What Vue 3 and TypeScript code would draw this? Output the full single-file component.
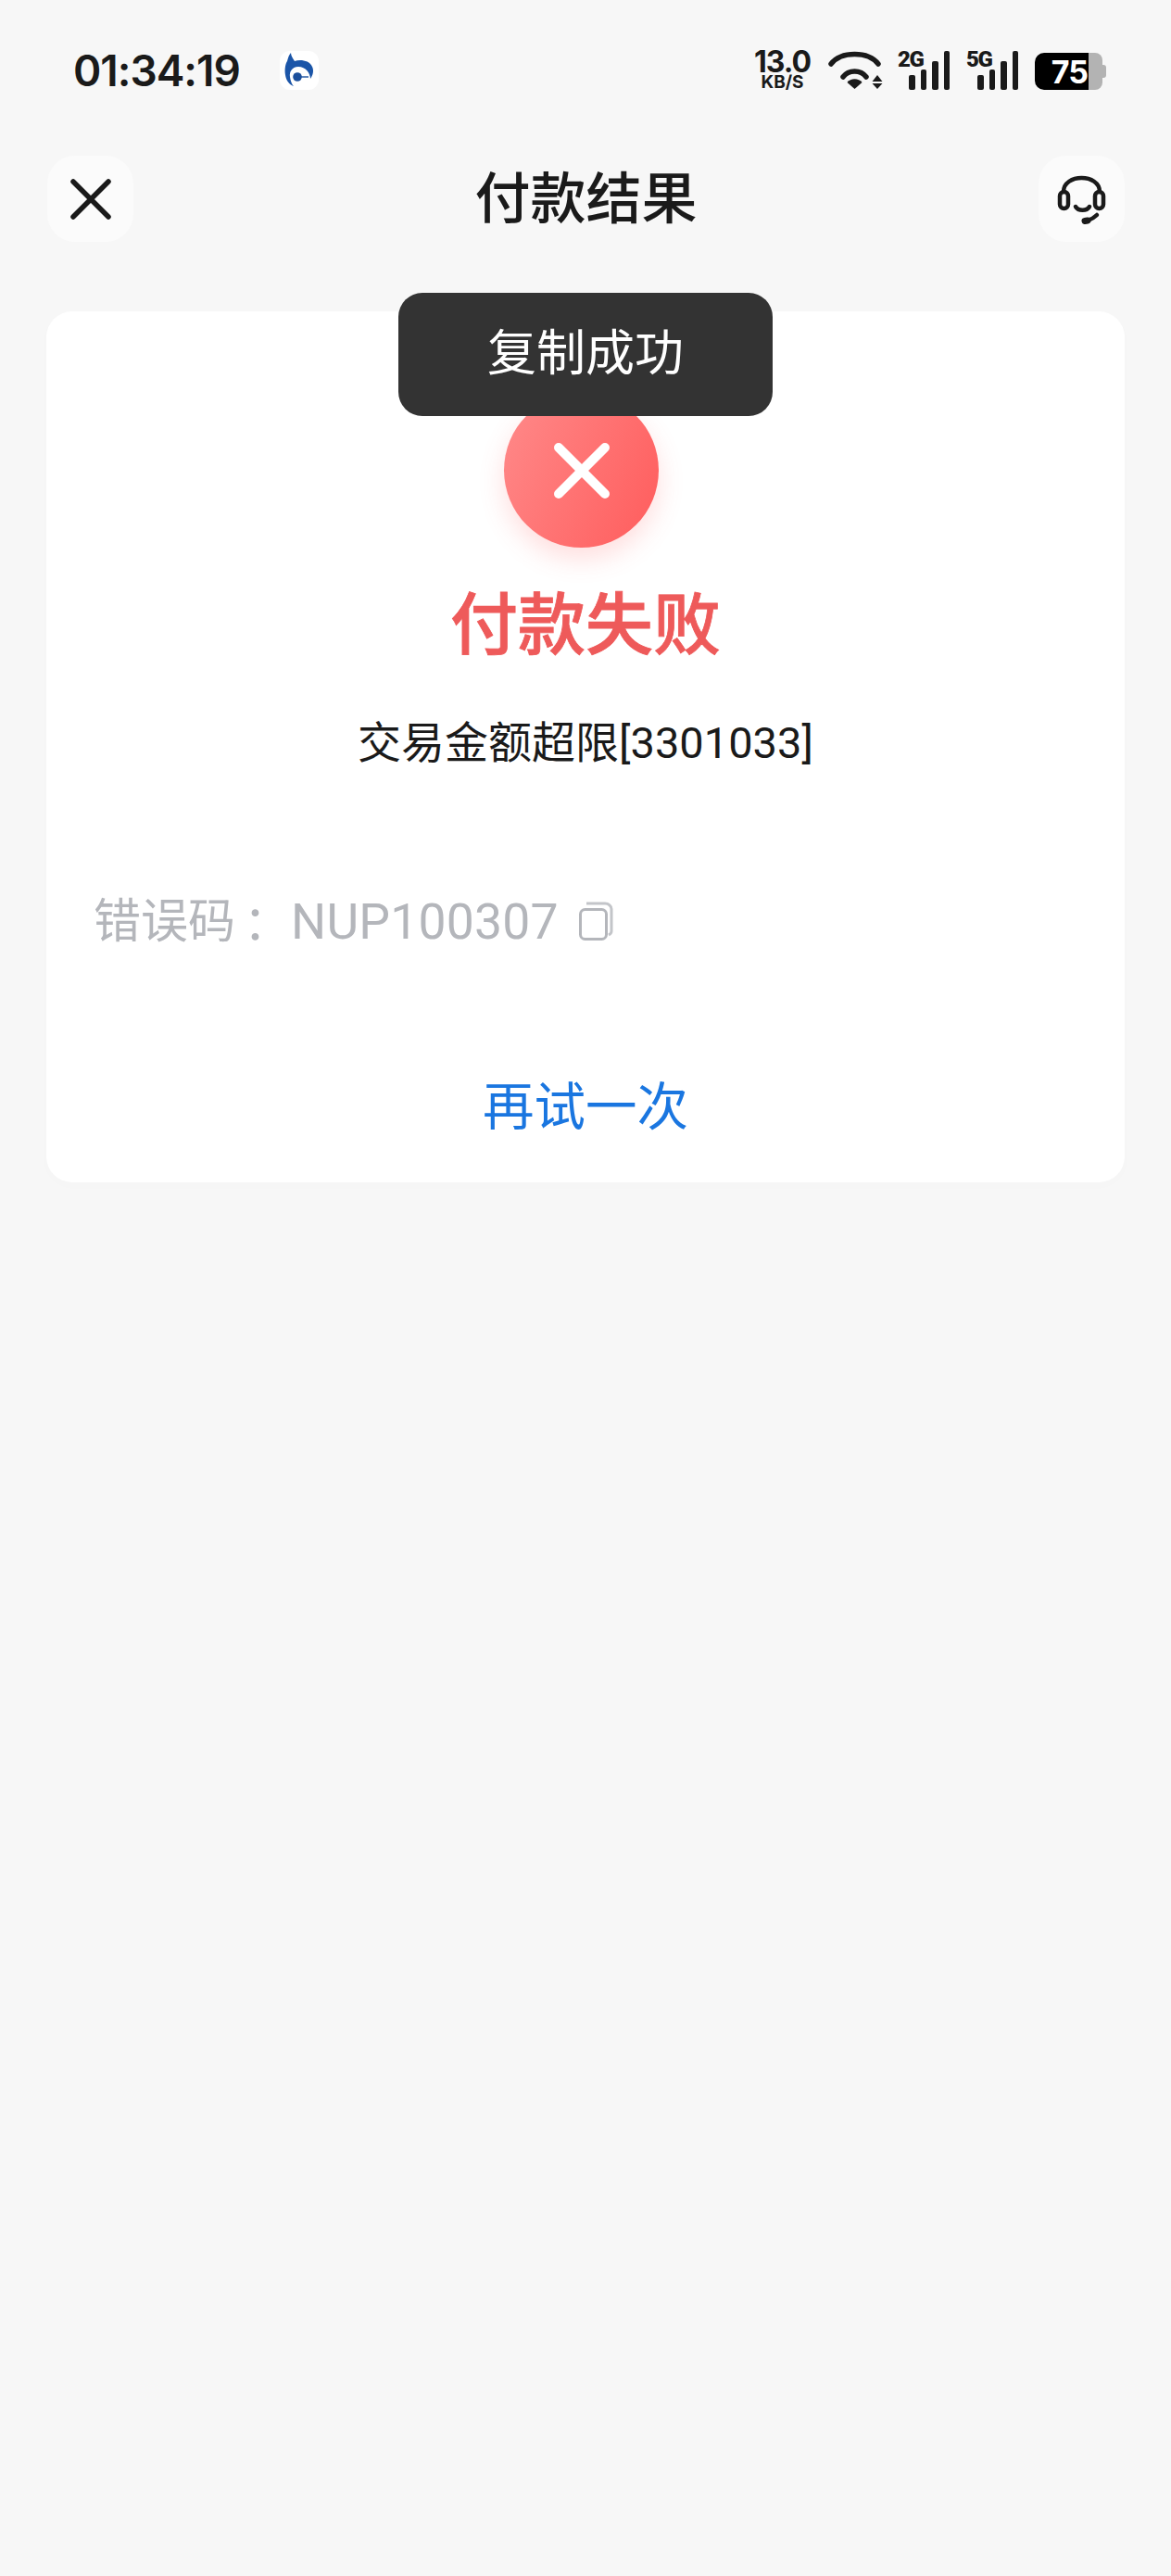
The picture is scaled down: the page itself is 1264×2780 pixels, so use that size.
<template>
  <div class="page">
    <header class="status">
      <div class="status__left">
        <span class="status__time">01:34:19</span>
        <span class="app-icon">
          <svg viewBox="0 0 42 42" width="42" height="42">
            <path fill="#1b55a8" d="M12 2 C12 5 14 8 16 11 C22 9 32 10 35 17 C37 21 36 26 33 30 C33 24 28 17 20 17 C13 17 10 23 11 28 C11.5 32 13 36 15 38 C10 36 7 32 6 26 C5 20 6 14 8 11 C9 7 10 4 12 2 Z" />
            <circle cx="19" cy="28" r="4.8" fill="#1b4f9c" />
            <path d="M23 28 H31" stroke="#1b4f9c" stroke-width="1.4" />
          </svg>
        </span>
      </div>
      <div class="status__right">
        <div class="speed">
          <span class="speed__num">13.0</span>
          <span class="speed__unit">KB/S</span>
        </div>
        <svg class="wifi" viewBox="0 0 60 42" width="60" height="42">
          <g fill="none" stroke="#1a1a1a" stroke-width="5.5" stroke-linecap="round">
            <path d="M3 14 C14 0 43 0 54 14" />
            <path d="M16 28 C22 20 35 20 41 28" />
          </g>
          <path fill="#1a1a1a" d="M20.5 34 C24 29 33 29 36.5 34 L28.5 41 Z" />
          <path fill="#1a1a1a" d="M47.5 33 L53 26 L58.5 33 Z M47.5 35 L58.5 35 L53 41 Z" />
        </svg>
        <div v-for="net in networks" :key="net" class="signal">
          <span class="signal__label">{{ net }}</span>
          <div class="signal__bars">
            <i v-for="h in barHeights" :key="h" :style="{ height: h + 'px' }"></i>
          </div>
        </div>
        <div class="battery">
          <div class="battery__fill"><span>75</span></div>
          <div class="battery__rest"></div>
          <div class="battery__cap"></div>
        </div>
      </div>
    </header>

    <nav class="nav">
      <button class="nav__btn">
        <svg class="nav__close" viewBox="0 0 44 44" width="44" height="44">
          <path d="M3 3 L41 41 M41 3 L3 41" stroke="#1a1a1a" stroke-width="5.5" stroke-linecap="round" />
        </svg>
      </button>
      <h1 class="nav__title">付款结果</h1>
      <button class="nav__btn">
        <svg viewBox="0 0 54 54" width="54" height="54" fill="none" stroke="#1a1a1a" stroke-width="4.5" stroke-linecap="round">
          <path d="M7 19 C7 -1 46 -1 46 19" />
          <rect x="3" y="19" width="9" height="18" rx="4.5" />
          <rect x="41" y="19" width="9" height="18" rx="4.5" />
          <path d="M20 35 C23 40 32 40 35 35" />
          <path d="M43 44 C40 47 36 49 33 50" />
          <path d="M30 50.5 L33 50" stroke-width="7" />
        </svg>
      </button>
    </nav>

    <main class="card">
      <div class="fail-icon">
        <svg viewBox="0 0 60 60" width="60" height="60">
          <path d="M5 5 L55 55 M55 5 L5 55" stroke="#fff" stroke-width="10" stroke-linecap="round" />
        </svg>
      </div>
      <div class="card__title">付款失败</div>
      <div class="card__msg">交易金额超限[3301033]</div>
      <div class="code">
        <span>错误码</span><span class="code__colon">：</span>
        <span class="code__value">NUP100307</span>
        <svg class="code__copy" viewBox="0 0 38 44" width="38" height="44" fill="none" stroke="#b4b6bb" stroke-width="3">
          <path d="M9 2 H29 C33 2 36 5 36 8 V32 C36 34 35 35 33 36" stroke="#c3c5c9" />
          <rect x="2.5" y="8.5" width="28" height="32" rx="5" />
        </svg>
      </div>
      <div class="retry">再试一次</div>
    </main>

    <div class="toast">复制成功</div>
  </div>
</template>

<script setup lang="ts">
const networks: string[] = ['2G', '5G']
const barHeights: number[] = [16, 22, 31, 42]
</script>

<style>
html,
body {
  background: #f7f7f7;
}
</style>

<style scoped>
.page {
  position: relative;
  width: 1264px;
  height: 2780px;
  background: #f7f7f7;
  font-family: 'Roboto', 'Noto Sans CJK SC', sans-serif;
  overflow: hidden;
}

.status {
  display: flex;
  align-items: center;
  justify-content: space-between;
  height: 152px;
  padding: 0 70px 0 79px;
  box-sizing: border-box;
}

.status__left {
  display: flex;
  align-items: center;
  gap: 43px;
}

.status__time {
  width: 180px;
  font-family: 'Inter', sans-serif;
  font-size: 46px;
  font-weight: 600;
  letter-spacing: -1px;
  white-space: nowrap;
  color: #1a1a1a;
}

.app-icon {
  display: flex;
  width: 42px;
  height: 42px;
  background: #fff;
  border-radius: 11px;
}

.status__right {
  display: flex;
  align-items: flex-end;
  height: 42px;
}

.speed {
  display: flex;
  flex-direction: column;
  align-items: center;
  width: 63px;
  margin-right: 18px;
  color: #1a1a1a;
  font-family: 'Inter', sans-serif;
  font-weight: 700;
}

.speed__num {
  font-size: 32px;
  line-height: 26px;
  letter-spacing: -1px;
}

.speed__unit {
  font-size: 19px;
  line-height: 17px;
}

.wifi {
  margin-right: 15px;
}

.signal {
  position: relative;
  width: 56px;
  height: 42px;
  margin-right: 18px;
}

.signal:last-of-type {
  margin-right: 21px;
}

.signal__label {
  position: absolute;
  left: 0;
  top: -3px;
  font-family: 'Roboto', sans-serif;
  font-size: 24px;
  line-height: 24px;
  font-weight: 900;
  letter-spacing: -1.5px;
  color: #1a1a1a;
}

.signal__bars {
  position: absolute;
  right: 0;
  bottom: 0;
  display: flex;
  align-items: flex-end;
  gap: 6px;
}

.signal__bars i {
  display: block;
  width: 6.5px;
  border-radius: 2px;
  background: #1a1a1a;
}

.battery {
  display: flex;
  align-items: center;
  height: 40px;
}

.battery__fill {
  display: flex;
  align-items: center;
  justify-content: flex-end;
  width: 58px;
  height: 40px;
  padding-right: 1px;
  box-sizing: border-box;
  background: #000;
  border-radius: 10px 0 0 10px;
}

.battery__fill span {
  font-family: 'Inter', sans-serif;
  font-size: 34px;
  font-weight: 700;
  letter-spacing: -1px;
  color: #fff;
}

.battery__rest {
  width: 15px;
  height: 40px;
  background: #b3b3b3;
  border-radius: 0 8px 8px 0;
}

.battery__cap {
  width: 4px;
  height: 14px;
  background: #b3b3b3;
  border-radius: 0 3px 3px 0;
}

.nav {
  display: flex;
  align-items: center;
  justify-content: space-between;
  height: 93px;
  margin: 16px 50px 0 51px;
}

.nav__btn {
  display: flex;
  align-items: center;
  justify-content: center;
  width: 93px;
  height: 93px;
  padding: 0;
  border: 0;
  border-radius: 30px;
  background: #fbfbfb;
}

.nav__title {
  margin: 2px 0 0;
  font-size: 60px;
  line-height: 84px;
  font-weight: 500;
  color: #1a1a1a;
}

.card {
  display: flex;
  flex-direction: column;
  align-items: center;
  height: 940px;
  margin: 75px 50px 0;
  padding: 88px 51px 40px;
  box-sizing: border-box;
  background: #fff;
  border-radius: 28px;
  box-shadow: 0 4px 16px rgba(0, 0, 0, 0.012);
}

.fail-icon {
  display: flex;
  flex: none;
  align-items: center;
  justify-content: center;
  width: 167px;
  height: 167px;
  margin-right: 9px;
  border-radius: 50%;
  background: linear-gradient(115deg, #ff8a8a 0%, #ff5c5c 100%);
  box-shadow: 0 12px 28px rgba(255, 92, 92, 0.2);
}

.card__title {
  margin-top: 34px;
  font-size: 73px;
  line-height: 100px;
  font-weight: 500;
  -webkit-text-stroke: 0.8px #ee5a5a;
  color: #ee5a5a;
}

.card__msg {
  margin-top: 47px;
  font-size: 47px;
  line-height: 60px;
  color: #1a1a1a;
}

.code {
  display: flex;
  align-items: center;
  align-self: flex-start;
  margin-top: 133px;
  font-size: 51px;
  line-height: 60px;
  color: #b4b6bb;
}

.code__colon {
  font-family: 'Noto Sans CJK TC', sans-serif;
  margin-left: -4px;
}

.code__value {
  margin-left: 13px;
  font-size: 53.5px;
  letter-spacing: 0.2px;
}

.code__copy {
  margin-left: 21px;
}

.retry {
  margin-top: 131px;
  font-size: 55.5px;
  line-height: 80px;
  color: #1a76e0;
}

.toast {
  position: absolute;
  left: 430px;
  top: 316px;
  width: 404px;
  height: 133px;
  border-radius: 26px;
  background: #333;
  color: #fff;
  font-size: 53px;
  line-height: 133px;
  text-align: center;
}
</style>
